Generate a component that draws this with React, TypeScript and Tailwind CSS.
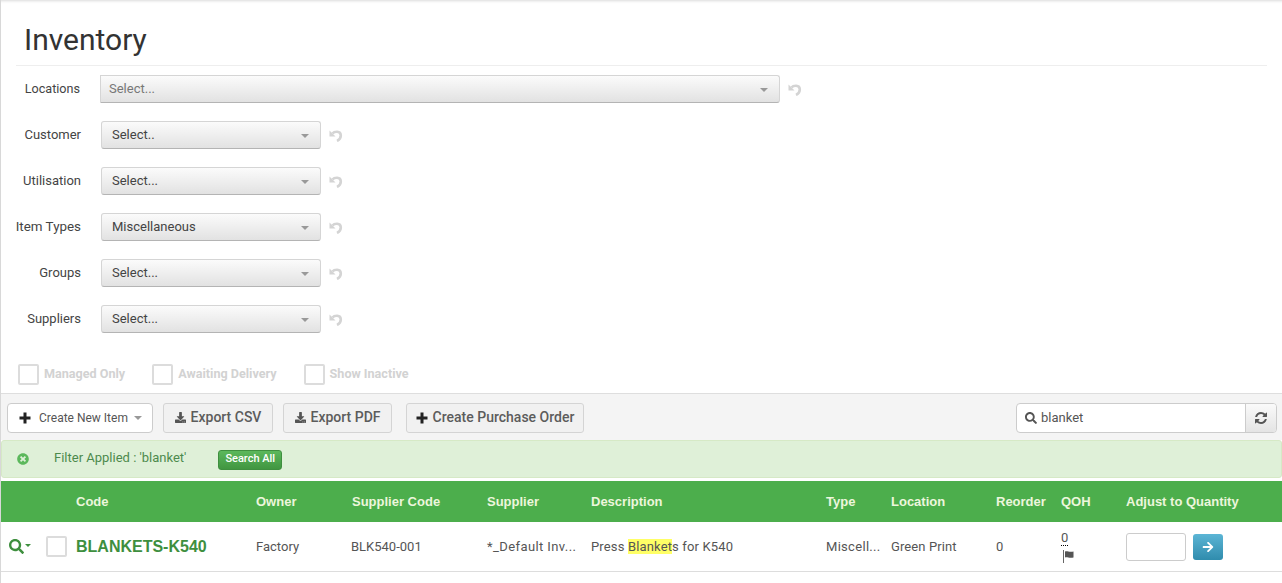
import { FaArrowRight, FaDownload, FaSearch, FaTimesCircle } from "react-icons/fa";

const filters = [
  { label: "Customer", value: "Select.." },
  { label: "Utilisation", value: "Select..." },
  { label: "Item Types", value: "Miscellaneous", labelClass: "text-[13.4px]" },
  { label: "Groups", value: "Select..." },
  { label: "Suppliers", value: "Select..." },
];

function UndoIcon({ className = "" }: { className?: string }) {
  return (
    <svg viewBox="0 0 14 14" className={className}>
      <path d="M0.5 2.5V8.5H6.5Z" fill="currentColor" />
      <path d="M3.5 5.5C5 3.5 11.8 2 11.8 7.5C11.8 10 10 12 8 13" fill="none" stroke="currentColor" strokeWidth="2.6" />
    </svg>
  );
}

function RefreshIcon({ className = "" }: { className?: string }) {
  return (
    <svg viewBox="0 0 1792 1792" fill="currentColor" className={className}>
      <path d="M1639 1056q0 5-1 7-64 268-268 434.5t-478 166.5q-146 0-282.5-55t-243.5-157l-129 129q-19 19-45 19t-45-19-19-45v-448q0-26 19-45t45-19h448q26 0 45 19t19 45-19 45l-137 137q71 66 161 102t187 36q134 0 250-65t186-179q11-17 53-117 8-23 30-23h192q13 0 22.5 9.5t9.5 22.5zm25-800v448q0 26-19 45t-45 19h-448q-26 0-45-19t-19-45 19-45l138-138q-148-137-349-137-134 0-250 65t-186 179q-11 17-53 117-8 23-30 23h-199q-13 0-22.5-9.5t-9.5-22.5v-7q65-268 270-434.5t480-166.5q146 0 284 55.5t245 156.5l130-129q19-19 45-19t45 19 19 45z" />
    </svg>
  );
}

function PlusIcon({ className = "" }: { className?: string }) {
  return (
    <svg viewBox="0 0 12 12" fill="currentColor" className={className}>
      <path d="M4.5 0.5h3v4h4v3h-4v4h-3v-4h-4v-3h4z" />
    </svg>
  );
}

function FlagIcon({ className = "" }: { className?: string }) {
  return (
    <svg viewBox="0 0 11 13" className={className}>
      <rect x="0" y="0" width="1" height="13" fill="#666" />
      <path d="M2 1.5C4 0.5 6 2.5 10.5 1.5V7.5C6 8.5 4 6.5 2 7.5Z" fill="#555" />
    </svg>
  );
}

function Caret({ className = "" }: { className?: string }) {
  return <span className={`inline-block w-0 h-0 border-x-[4px] border-x-transparent border-t-[4px] border-t-[#999] ${className}`} />;
}

function SelectBox({ value, className, textClass }: { value: string; className: string; textClass: string }) {
  return (
    <div className={`h-7 flex items-center justify-between rounded-[3px] border border-[#d5d5d5] border-b-[#b4b4b4] bg-gradient-to-b from-[#fbfbfb] to-[#e2e2e2] pr-[11px] text-[13px] ${className} ${textClass}`}>
      <span>{value}</span>
      <Caret className="mt-[2px]" />
    </div>
  );
}

function Toolbtn({ icon, label, className }: { icon: React.ReactNode; label: string; className: string }) {
  return (
    <button className={`h-[30px] flex items-center justify-center gap-[5px] rounded-[3px] border border-[#d4d4d4] bg-[#f1f1f1] text-[14px] font-medium text-[#5c5c5c] ${className}`}>
      {icon}
      {label}
    </button>
  );
}

function Check({ label }: { label: string }) {
  return (
    <div className="flex items-center gap-[5px]">
      <span className="w-[21px] h-[21px] rounded-[2px] border-[2px] border-[#dcdcdc] bg-white" />
      <span className="text-[12.6px] font-bold text-[#d2d2d2]">{label}</span>
    </div>
  );
}

export default function App() {
  return (
    <div className="w-[1282px] h-[583px] overflow-hidden bg-white border-l border-[#d8d8d8] font-['Roboto',sans-serif] text-[#555] shadow-[inset_0_4px_3px_-3px_rgba(0,0,0,0.15)]">
      <div className="pl-[15px] pr-[15px]">
        <div className="h-[66px] flex items-end border-b border-[#eee]">
          <h1 className="pl-[8px] pb-[7px] text-[30px] leading-[36px] font-normal text-[#333]">Inventory</h1>
        </div>

        <div className="flex items-center mt-[9px]">
          <label className="w-[65px] text-right text-[12.6px] text-[#444] -ml-px">Locations</label>
          <SelectBox value="Select..." className="w-[680px] ml-[20px] pl-[8px] rounded-none rounded-r-[3px]" textClass="text-[#777]" />
          <UndoIcon className="ml-[8px] w-[14px] h-[14px] text-[#d4d4d4]" />
        </div>

        <div className="flex flex-col gap-[18px] mt-[18px]">
          {filters.map((f) => (
            <div key={f.label} className="flex items-center">
              <label className={`w-[66px] -ml-px text-right text-[#444] whitespace-nowrap ${f.labelClass ?? "text-[13px]"}`}>{f.label}</label>
              <SelectBox value={f.value} className="w-[220px] ml-[20px] pl-[10px]" textClass="text-[#444]" />
              <UndoIcon className="ml-[8px] w-[14px] h-[14px] text-[#d4d4d4]" />
            </div>
          ))}
        </div>

        <div className="flex gap-[27px] mt-[31px] pl-[2px]">
          <Check label="Managed Only" />
          <Check label="Awaiting Delivery" />
          <Check label="Show Inactive" />
        </div>
      </div>

      <div className="mt-[8px] h-[47px] border-t border-[#dedede] bg-[#f4f4f4] flex items-center pl-[6px] pr-[5px] pt-[1px]">
        <button className="w-[146px] h-[30px] flex items-center gap-[8px] pl-[11px] rounded-[4px] border border-[#ccc] bg-white text-[12px] text-[#555]">
          <PlusIcon className="w-[12px] h-[12px] text-[#222]" />
          Create New Item
          <Caret className="ml-[-2px] mt-[1px]" />
        </button>
        <Toolbtn className="w-[110px] ml-[10px]" label="Export CSV" icon={<FaDownload className="text-[11px] text-[#555]" />} />
        <Toolbtn className="w-[109px] ml-[10px]" label="Export PDF" icon={<FaDownload className="text-[11px] text-[#555]" />} />
        <Toolbtn className="w-[178px] ml-[14px]" label="Create Purchase Order" icon={<PlusIcon className="w-[12px] h-[12px] text-[#222]" />} />
        <div className="ml-auto w-[261px] h-[30px] flex rounded-[4px] border border-[#ccc] bg-white overflow-hidden">
          <div className="flex-1 flex items-center gap-[4px] pl-[8px] text-[13px] text-[#555]">
            <FaSearch className="text-[12px] text-[#555]" />
            blanket
          </div>
          <div className="w-[31px] flex items-center justify-center border-l border-[#ccc] bg-gradient-to-b from-[#fafafa] to-[#e4e4e4]">
            <RefreshIcon className="w-[14px] h-[14px] text-[#555]" />
          </div>
        </div>
      </div>

      <div className="h-[38px] flex items-center rounded-[3px] border border-[#d6e9c6] bg-[#dff0d8] text-[13px] text-[#4d8a4d]">
        <FaTimesCircle className="ml-[15px] text-[12px] text-[#5cb85c]" />
        <span className="ml-[25px] mb-[3px]">Filter Applied : 'blanket'</span>
        <span className="ml-[32px] mt-[1px] h-[20px] px-[6px] flex items-center rounded-[3px] border border-[#3f8f3f] bg-gradient-to-b from-[#5cb85c] to-[#419641] text-[11px] font-medium text-white">Search All</span>
      </div>

      <div className="mt-[3px] h-[41px] flex items-center bg-[#4cae4c] text-[13px] font-bold font-['Liberation_Sans',sans-serif] text-[#ecf6dc]">
        <span className="ml-[75px] w-[180px]">Code</span>
        <span className="w-[96px]">Owner</span>
        <span className="w-[135px]">Supplier Code</span>
        <span className="w-[104px]">Supplier</span>
        <span className="w-[235px]">Description</span>
        <span className="w-[65px]">Type</span>
        <span className="w-[105px]">Location</span>
        <span className="w-[65px]">Reorder</span>
        <span className="w-[65px]">QOH</span>
        <span>Adjust to Quantity</span>
      </div>

      <div className="h-[50px] flex items-center border-b border-[#ddd] text-[13px] text-[#555]">
        <FaSearch className="ml-[8px] text-[15px] text-[#3e8f3e]" />
        <Caret className="ml-[1px] mb-[2px] !border-x-[3px] !border-t-[3px] !border-t-[#3e8f3e]" />
        <span className="ml-[15px] w-[21px] h-[21px] rounded-[2px] border-[2px] border-[#dcdcdc] bg-white" />
        <span className="ml-[9px] w-[180px] text-[16px] font-bold font-['Liberation_Sans',sans-serif] text-[#3e8f3e] whitespace-nowrap">BLANKETS-K540</span>
        <span className="w-[95px]">Factory</span>
        <span className="w-[136px]">BLK540-001</span>
        <span className="w-[104px] tracking-[0.4px] whitespace-nowrap">*_Default Inv...</span>
        <span className="w-[235px] tracking-[0.15px]">
          Press <mark className="bg-[#ffff66] text-[#555]">Blanket</mark>s for K540
        </span>
        <span className="w-[65px] tracking-[0.3px]">Miscell...</span>
        <span className="w-[105px] tracking-[0.1px]">Green Print</span>
        <span className="w-[65px]">0</span>
        <div className="w-[65px] flex flex-col items-start">
          <span className="border-b border-dotted border-black leading-[15px] text-[#555]">0</span>
          <FlagIcon className="ml-[2px] mt-[4px] w-[11px] h-[13px]" />
        </div>
        <span className="w-[60px] h-[28px] rounded-[3px] border border-[#ccc] bg-white" />
        <button className="ml-[7px] w-[30px] h-[26px] flex items-center justify-center rounded-[3px] bg-gradient-to-b from-[#5bb5d5] to-[#2f8cad] text-white">
          <FaArrowRight className="text-[12px]" />
        </button>
      </div>
    </div>
  );
}
